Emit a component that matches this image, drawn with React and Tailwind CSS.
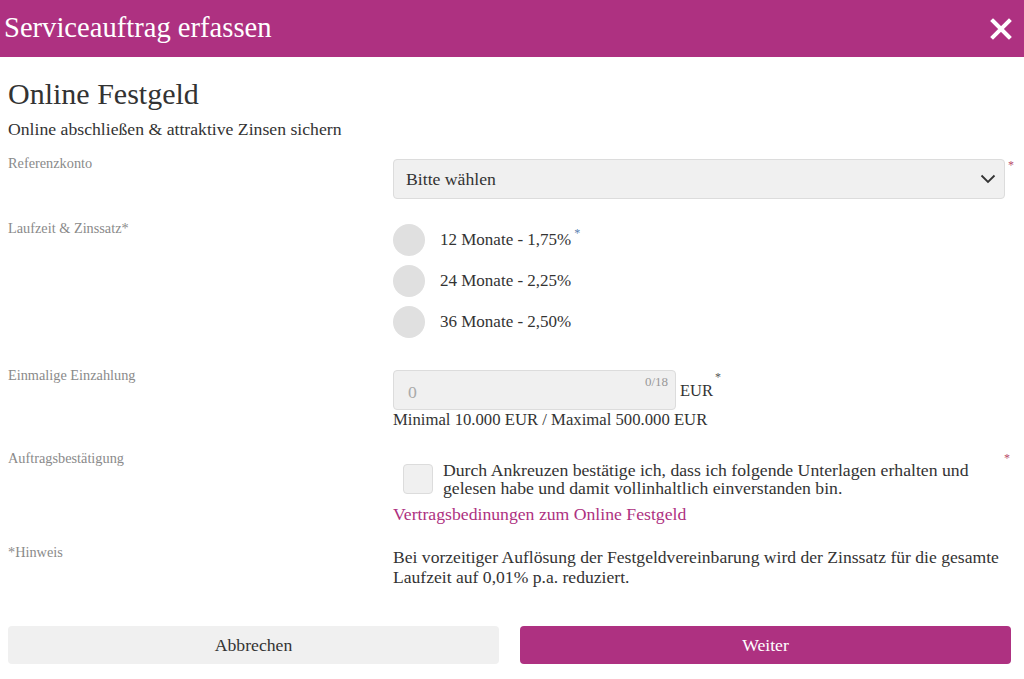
import { useState } from "react";

function Label({ children }) {
  return <div className="w-[385px] shrink-0 text-[14.3px] leading-[16px] text-[#8a8a8a]">{children}</div>;
}

export default function App() {
  const [term, setTerm] = useState(null);
  const [agreed, setAgreed] = useState(false);
  const terms = ["12 Monate - 1,75%", "24 Monate - 2,25%", "36 Monate - 2,50%"];

  return (
    <div className="min-h-screen w-full bg-white text-[#333]" style={{ fontFamily: '"Liberation Serif", serif' }}>
      <header className="flex h-[57px] items-center justify-between bg-[#ae3181] pl-1 pr-[12px]">
        <h1 className="text-[28.6px] leading-none text-white">Serviceauftrag erfassen</h1>
        <button className="flex items-center justify-center text-white">
          <svg width="22" height="22" viewBox="0 0 22 22">
            <path d="M3 3 L19 19 M19 3 L3 19" stroke="white" strokeWidth="4" strokeLinecap="square" />
          </svg>
        </button>
      </header>

      <main className="px-2 text-[17.7px]">
        <h2 className="mt-[19px] text-[30px] leading-[36px] text-[#333]">Online Festgeld</h2>
        <p className="mt-[6px] leading-[22px]">Online abschließen &amp; attraktive Zinsen sichern</p>

        <div className="mt-[15px] flex">
          <Label>Referenzkonto</Label>
          <div className="mt-[4px] flex flex-1 items-start">
            <div className="flex h-[40px] w-[612px] items-center justify-between rounded border border-[#dcdcdc] bg-[#f0f0f0] pl-3 pr-[8px]">
              <span>Bitte wählen</span>
              <svg width="16" height="10" viewBox="0 0 16 10">
                <path d="M1.5 1.5 L8 8 L14.5 1.5" fill="none" stroke="#333" strokeWidth="1.8" />
              </svg>
            </div>
            <span className="ml-[3px] mt-[1px] text-[12px] leading-[10px] text-[#b94a6a]">*</span>
          </div>
        </div>

        <div className="mt-[21px] flex">
          <Label>Laufzeit &amp; Zinssatz*</Label>
          <div className="mt-[4px] flex flex-col gap-[9px]">
            {terms.map((t, i) => (
              <button key={t} onClick={() => setTerm(i)} className="flex h-[32px] items-center text-left">
                <span className={`h-[32px] w-[32px] rounded-full ${term === i ? "bg-[#ae3181]" : "bg-[#e0e0e0]"}`} />
                <span className="ml-[15px] text-[17px]">{t}</span>
                {i === 0 ? <span className="mb-[14px] ml-[3px] text-[12px] text-[#5a7fb0]">*</span> : null}
              </button>
            ))}
          </div>
        </div>

        <div className="mt-[29px] flex">
          <Label>Einmalige Einzahlung</Label>
          <div className="mt-[3px] flex flex-col">
            <div className="flex items-start">
              <div className="relative h-[40px] w-[283px] rounded border border-[#dcdcdc] bg-[#f0f0f0]">
                <span className="absolute left-[14px] top-[8px] text-[#aaa]">0</span>
                <span className="absolute right-[7px] top-[1px] text-[13px] text-[#999]">0/18</span>
              </div>
              <span className="ml-[4px] mt-[9px] text-[16.5px]">EUR</span>
              <span className="ml-[2px] mt-[-2px] text-[12px] text-[#555]">*</span>
            </div>
            <p className="text-[16.7px] leading-[20px]">Minimal 10.000 EUR / Maximal 500.000 EUR</p>
          </div>
        </div>

        <div className="mt-[20px] flex">
          <Label>Auftragsbestätigung</Label>
          <div className="flex flex-1 flex-col">
            <div className="flex items-start">
              <button
                onClick={() => setAgreed(!agreed)}
                className={`ml-[10px] mt-[14px] h-[30px] w-[30px] shrink-0 rounded border border-[#dcdcdc] ${agreed ? "bg-[#ae3181]" : "bg-[#f0f0f0]"}`}
              />
              <p className="ml-[10px] mt-[11px] w-[545px] leading-[18px]">
                Durch Ankreuzen bestätige ich, dass ich folgende Unterlagen erhalten und gelesen habe und damit vollinhaltlich einverstanden bin.
              </p>
              <span className="ml-auto mr-[6px] mt-[3px] text-[12px] leading-[10px] text-[#b94a6a]">*</span>
            </div>
            <a href="#" className="mt-[6px] leading-[22px] text-[#ae3181]">Vertragsbedinungen zum Online Festgeld</a>
          </div>
        </div>

        <div className="mt-[19px] flex">
          <Label>*Hinweis</Label>
          <p className="mt-[3px] w-[615px] text-[17.6px] leading-[20px]">
            Bei vorzeitiger Auflösung der Festgeldvereinbarung wird der Zinssatz für die gesamte Laufzeit auf 0,01% p.a. reduziert.
          </p>
        </div>

        <div className="mt-[39px] grid grid-cols-2 gap-[21px] pr-[5px]">
          <button className="h-[38px] rounded bg-[#f0f0f0] text-[#333]">Abbrechen</button>
          <button className="h-[38px] rounded bg-[#ae3181] text-white">Weiter</button>
        </div>
      </main>
    </div>
  );
}
